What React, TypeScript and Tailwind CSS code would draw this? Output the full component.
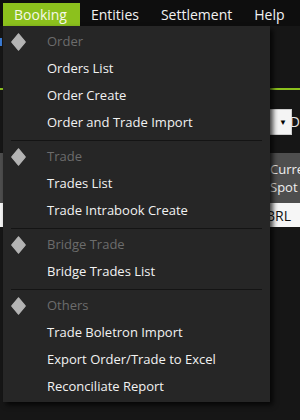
import React from "react";

type Group = { title: string; items: string[] };

const groups: Group[] = [
  { title: "Order", items: ["Orders List", "Order Create", "Order and Trade Import"] },
  { title: "Trade", items: ["Trades List", "Trade Intrabook Create"] },
  { title: "Bridge Trade", items: ["Bridge Trades List"] },
  { title: "Others", items: ["Trade Boletron Import", "Export Order/Trade to Excel", "Reconciliate Report"] },
];

const topMenu = ["Booking", "Entities", "Settlement", "Help"];

function Diamond() {
  return (
    <svg width="15" height="18" viewBox="0 0 15 18">
      <polygon points="7.5,0.8 14.2,9 7.5,17.2 0.8,9" fill="#b4b4b4" stroke="#b4b4b4" strokeWidth="1.2" strokeLinejoin="round" />
    </svg>
  );
}

export default function App() {
  return (
    <div
      className="relative w-[300px] h-[420px] overflow-hidden bg-[#161616] text-[13px]"
      style={{ fontFamily: '"Open Sans", "Noto Sans", sans-serif' }}
    >
      {/* menu bar */}
      <div className="flex h-[26px] items-end bg-[#0e0e0e] pl-[3px]">
        {topMenu.map((m, i) => (
          <div
            key={m}
            className={`flex h-[23px] items-center text-[14px] leading-none ${
              i === 0 ? "bg-[#8cc11d] pl-[11px] pr-[13px] text-[#f6f8e8]" : "px-[11px] text-[#f2f2f2]"
            }`}
          >
            {m}
          </div>
        ))}
      </div>

      {/* page behind the menu */}
      <div className="flex flex-col">
        <div className="h-[20px] pt-[12px]">
          <span className="block h-[8px] w-[2px] bg-[#3a7bd5]" />
        </div>
        <div className="h-[42px]" />
        <div className="h-[2px] bg-[#8cc11d]" />
        <div className="h-[19px]" />
        <div className="flex h-[26px] items-stretch justify-end">
          <div className="flex w-[28px] items-center justify-end border border-[#cfcfcf] bg-[#f4f4f4] pr-[4px]">
            <span className="text-[8px] leading-none text-black">▼</span>
          </div>
          <div className="flex w-[8px] items-center justify-end pl-[2px] text-[14px] leading-none text-[#e8e8e8]">
            D
          </div>
        </div>
        <div className="h-[18px]" />
        <div className="flex h-[50px] flex-col justify-center overflow-hidden bg-[#4e4e4e] pl-[270px] text-[13px] leading-[18px] text-[#eeeeee]">
          <span className="whitespace-nowrap">Currency</span>
          <span>Spot</span>
        </div>
        <div className="flex h-[24px] items-center bg-[#f6f6f6] pl-[266px] text-[14px] text-[#111]">BRL</div>
      </div>

      {/* dropdown */}
      <div className="absolute left-[3px] top-[26px] w-[267px] h-[376px] bg-[#262626] pt-[3px] shadow-[3px_3px_5px_rgba(0,0,0,0.75)]">
        {groups.map((g, gi) => (
          <div key={g.title}>
            {gi > 0 && (
              <div className="flex h-[8px] items-center px-[8px]">
                <div className="h-px w-full bg-[#141414]" />
              </div>
            )}
            <div className="flex h-[26px] items-center">
              <div className="flex w-[44px] items-center pl-[8px]">
                <Diamond />
              </div>
              <span className="text-[#6c6c6c]">{g.title}</span>
            </div>
            {g.items.map((it) => (
              <div key={it} className="flex h-[27px] items-center pl-[44px] text-[#f2f2f2]">
                {it}
              </div>
            ))}
          </div>
        ))}
      </div>
    </div>
  );
}
